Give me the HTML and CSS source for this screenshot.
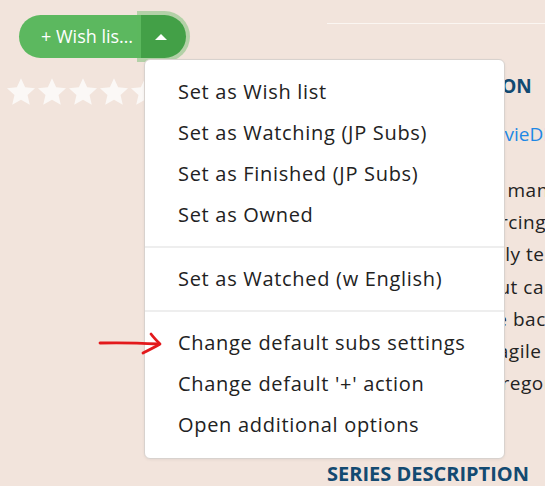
FILE: index.html
```html
<!DOCTYPE html>
<html>
<head>
<meta charset="utf-8">
<link rel="stylesheet" href="styles.css">
</head>
<body>
<div class="page">
  <div class="left">
    <div class="btn-group">
      <button class="btn-main">+ Wish lis…</button>
      <button class="btn-toggle"><span class="caret"></span></button>
      <div class="menu">
        <div class="item">Set as Wish list</div>
        <div class="item">Set as Watching (JP Subs)</div>
        <div class="item">Set as Finished (JP Subs)</div>
        <div class="item">Set as Owned</div>
        <div class="divider"></div>
        <div class="item">Set as Watched (w English)</div>
        <div class="divider"></div>
        <div class="item">Change default subs settings</div>
        <div class="item">Change default '+' action</div>
        <div class="item">Open additional options</div>
      </div>
    </div>
    <div class="stars">
      <svg viewBox="1.5 1.5 21 20"><path d="M12 1.5l3.1 6.9 7.4.7-5.6 5 1.7 7.4L12 17.6l-6.6 3.9 1.7-7.4-5.6-5 7.4-.7z"/></svg>
      <svg viewBox="1.5 1.5 21 20"><path d="M12 1.5l3.1 6.9 7.4.7-5.6 5 1.7 7.4L12 17.6l-6.6 3.9 1.7-7.4-5.6-5 7.4-.7z"/></svg>
      <svg viewBox="1.5 1.5 21 20"><path d="M12 1.5l3.1 6.9 7.4.7-5.6 5 1.7 7.4L12 17.6l-6.6 3.9 1.7-7.4-5.6-5 7.4-.7z"/></svg>
      <svg viewBox="1.5 1.5 21 20"><path d="M12 1.5l3.1 6.9 7.4.7-5.6 5 1.7 7.4L12 17.6l-6.6 3.9 1.7-7.4-5.6-5 7.4-.7z"/></svg>
      <svg viewBox="1.5 1.5 21 20"><path d="M12 1.5l3.1 6.9 7.4.7-5.6 5 1.7 7.4L12 17.6l-6.6 3.9 1.7-7.4-5.6-5 7.4-.7z"/></svg>
    </div>
  </div>
  <div class="right">
    <h2 class="heading heading-info">SERIES INFORMATION</h2>
    <div class="source">Data source: <a class="link" href="#">TheMovieDB</a></div>
    <div class="para">
      <div class="line">The tale of a sweet man who</div>
      <div class="line">he finds himself forcing</div>
      <div class="line">so, his path to finally tell</div>
      <div class="line">his plain truth about can</div>
      <div class="line">when he was at the back</div>
      <div class="line">a quiet, lost and fragile</div>
      <div class="line">and a hope long foregone</div>
    </div>
    <h2 class="heading heading-desc">SERIES DESCRIPTION</h2>
  </div>
</div>
<svg class="arrow" viewBox="0 0 66 26" width="66" height="26">
  <path d="M2 13 C20 12.5, 42 13, 61 14" />
  <path d="M53 4 C56 8, 59 11, 62 14 C57 17, 51 20, 45 23" />
</svg>
</body>
</html>
```
FILE: styles.css
```css
* { box-sizing: border-box; }
html, body {
  margin: 0;
  padding: 0;
  background: #f2e4dc;
  font-family: "Open Sans", "DejaVu Sans", sans-serif;
  color: #222;
  overflow: hidden;
  height: 486px;
}
.page {
  display: grid;
  grid-template-columns: 327px 1fr;
  height: 486px;
}
.left {
  padding-top: 15px;
}
.btn-group {
  position: relative;
  display: flex;
  margin-left: 19px;
  width: max-content;
}
.btn-main {
  height: 43px;
  width: 122px;
  border: 0;
  margin: 0;
  padding: 0 0 1px 22px;
  text-align: left;
  background: #5cb85f;
  color: #fff;
  font-family: inherit;
  font-size: 18px;
  border-radius: 22px 0 0 22px;
  white-space: nowrap;
}
.btn-toggle {
  height: 43px;
  width: 45px;
  border: 0;
  margin: 0;
  padding: 0 6px 0 0;
  background: #43a047;
  border-radius: 0 22px 22px 0;
  box-shadow: 0 0 0 4px rgba(92, 184, 92, 0.42);
  display: flex;
  align-items: center;
  justify-content: center;
}
.caret {
  width: 0;
  height: 0;
  border-left: 6px solid transparent;
  border-right: 6px solid transparent;
  border-bottom: 6px solid #fff;
}
.menu {
  position: absolute;
  left: 125px;
  top: 44px;
  width: 361px;
  height: 400px;
  background: #fff;
  border: 1px solid #d8d2ce;
  border-radius: 6px;
  padding: 11px 0;
  z-index: 5;
  box-shadow: 0 1px 3px rgba(0,0,0,0.06);
}
.item {
  height: 41px;
  line-height: 41px;
  padding-left: 33px;
  font-size: 20px;
  letter-spacing: 0.7px;
  color: #222;
  white-space: nowrap;
}
.divider {
  height: 2px;
  background: #eeeeee;
  margin: 11px 0 10px;
}
.stars {
  display: flex;
  gap: 3px;
  margin: 20px 0 0 7px;
}
.stars svg {
  width: 28px;
  height: 27px;
  fill: #fbf8f6;
}
.right {
  margin-top: 23px;
  border-top: 1px solid #fbf6f2;
  white-space: nowrap;
  overflow: hidden;
}
.heading {
  margin: 0;
  font-weight: 700;
  color: #134a71;
}
.heading-info {
  margin-top: 49px;
  font-size: 19px;
  line-height: 26px;
}
.source {
  margin-top: 22px;
  font-size: 19px;
  line-height: 26px;
}
.link {
  color: #1e88e5;
  text-decoration: none;
}
.para {
  margin-top: 27px;
  font-size: 19px;
  line-height: 32.2px;
  letter-spacing: 0.5px;
}
.heading-desc {
  margin-top: 61px;
  font-size: 20px;
  line-height: 27px;
}
.arrow {
  position: absolute;
  left: 98px;
  top: 330px;
  z-index: 10;
  fill: none;
  stroke: #e3191c;
  stroke-width: 2.8;
  stroke-linecap: round;
  stroke-linejoin: round;
}
```
